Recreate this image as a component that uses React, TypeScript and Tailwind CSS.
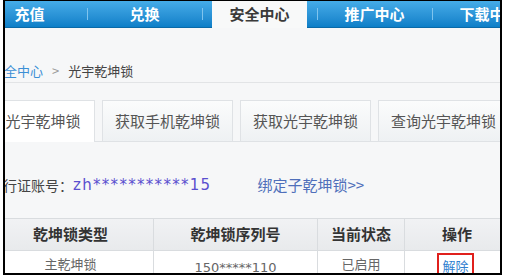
const font = { fontFamily: '"Noto Sans CJK SC", "Liberation Sans", sans-serif' };

const navItems = ['充值', '兑换', '安全中心', '推广中心', '下载中心'];

const NavBar = () => (
  <div className="h-[27px] flex items-stretch bg-gradient-to-b from-[#45ace8] to-[#0c7fc8] border-b border-[#0a6aa8]">
    <div className="flex ml-[-23px]">
      {navItems.map((item, i) => (
        <div key={item} className="flex">
          {i > 0 && (
            <div className="w-[20px] flex items-center justify-center">
              <div className="w-px h-[12px] bg-[#7fc4ee]" />
            </div>
          )}
          {item === '安全中心' ? (
            <div className="w-[95px] flex items-center justify-center bg-[#f8f9f9] text-[15px] font-bold text-[#3a3a3a] mb-[-1px]">
              {item}
            </div>
          ) : (
            <div className="w-[95px] flex items-center justify-center text-[15px] font-bold text-white">
              {item}
            </div>
          )}
        </div>
      ))}
    </div>
  </div>
);

const tabs = ['获取手机乾坤锁', '获取光宇乾坤锁', '查询光宇乾坤锁'];

const App = () => {
  return (
    <div className="w-[505px] h-[279px] bg-white overflow-hidden" style={font}>
      <div className="ml-[3px] w-[499px] h-[275px] border-t border-x-2 border-b-2 border-black bg-[#f6f7f8] overflow-hidden">
        <NavBar />

        {/* breadcrumb */}
        <div className="h-[55px] pt-[34px] border-b border-[#e2e4e6] text-[13px] leading-[18px] whitespace-nowrap">
          <span className="ml-[-14px] text-[#3b8fd5]">安全中心</span>
          <span className="mx-[9px] text-[#9a9a9a]">&gt;</span>
          <span className="text-[#444]">光宇乾坤锁</span>
        </div>

        {/* tabs */}
        <div className="mt-[17px] h-[42px] flex border-b border-[#dfe2e5] whitespace-nowrap">
          <div className="ml-[-13px] w-[103px] shrink-0 flex items-center justify-center bg-white border-t border-r border-[#dfe2e5] mb-[-1px] text-[15px] text-[#555]">
            光宇乾坤锁
          </div>
          {tabs.map((t) => (
            <div
              key={t}
              className="ml-[7px] w-[131px] shrink-0 flex items-center justify-center bg-gradient-to-b from-[#fbfcfc] to-[#eef1f3] border-t border-x border-[#dfe2e5] text-[15px] text-[#555]"
            >
              {t}
            </div>
          ))}
        </div>

        {/* account */}
        <div className="mt-[33px] h-[20px] flex items-center whitespace-nowrap text-[14px] leading-[20px]">
          <span className="ml-[-16px] text-[#444]">通行证账号：</span>
          <span
            className="text-[15px] text-[#5a4fcf] tracking-[1.3px]"
            style={{ fontFamily: '"DejaVu Sans", sans-serif' }}
          >
            zh***********15
          </span>
          <span className="ml-[46px] text-[15px] text-[#4f6fba]">绑定子乾坤锁&gt;&gt;</span>
        </div>

        {/* table */}
        <div className="mt-[23px] ml-[-17px] w-[521px] border-t border-[#d9dcdf]">
          <div className="grid grid-cols-[166px_164px_87px_104px] h-[32px] bg-gradient-to-b from-[#f1f2f4] to-[#e8eaec] border-b border-[#d9dcdf] text-[15px] font-bold text-[#333]">
            <div className="flex items-center justify-center border-r border-[#d9dcdf]">乾坤锁类型</div>
            <div className="flex items-center justify-center border-r border-[#d9dcdf]">乾坤锁序列号</div>
            <div className="flex items-center justify-center border-r border-[#d9dcdf]">当前状态</div>
            <div className="flex items-center justify-center">操作</div>
          </div>
          <div className="grid grid-cols-[166px_164px_87px_104px] h-[30px] bg-white text-[13px] leading-[18px] text-[#666]">
            <div className="flex justify-center pt-[4px] border-r border-[#d9dcdf]">主乾坤锁</div>
            <div
              className="flex justify-center pt-[8px] border-r border-[#d9dcdf]"
              style={{ fontFamily: '"DejaVu Sans", sans-serif' }}
            >
              150*****110
            </div>
            <div className="flex justify-center pt-[4px] border-r border-[#d9dcdf]">已启用</div>
            <div className="flex justify-center pt-[2px] pr-[3px]">
              <div className="h-[32px] border-2 border-[#e0201c] px-[3px] pt-[2px] text-[#2f7fd0]">解除</div>
            </div>
          </div>
        </div>
      </div>
    </div>
  );
};

export default App;
